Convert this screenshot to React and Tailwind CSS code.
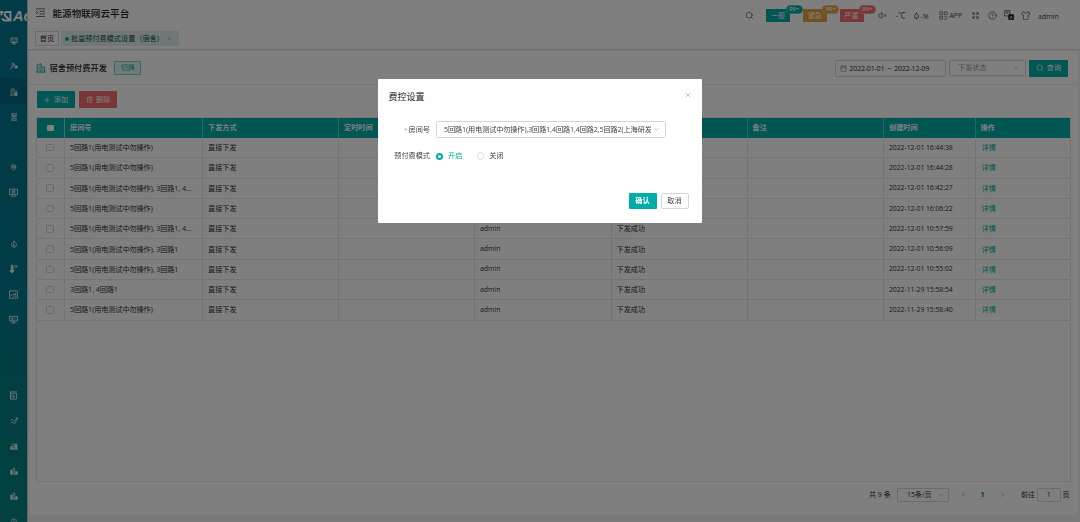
import {
  Search, Plus, Trash2, Calendar, ChevronDown, ChevronLeft, ChevronRight, X, VolumeX,
  CircleHelp, Shirt, Droplet, UserCog, MapPin, Settings,
} from "lucide-react";
import clsx from "clsx";

const rows = [
  ["5回路1(用电测试中勿操作)", "2022-12-01 16:44:38"],
  ["5回路1(用电测试中勿操作)", "2022-12-01 16:44:28"],
  ["5回路1(用电测试中勿操作), 3回路1, 4...", "2022-12-01 16:42:27"],
  ["5回路1(用电测试中勿操作)", "2022-12-01 16:06:22"],
  ["5回路1(用电测试中勿操作), 3回路1, 4...", "2022-12-01 10:57:59"],
  ["5回路1(用电测试中勿操作), 3回路1", "2022-12-01 10:56:09"],
  ["5回路1(用电测试中勿操作), 3回路1", "2022-12-01 10:55:02"],
  ["3回路1, 4回路1", "2022-11-29 15:58:54"],
  ["5回路1(用电测试中勿操作)", "2022-11-29 15:58:40"],
];

const columns = "grid grid-cols-[28px_138px_136px_136px_136.5px_136px_136.5px_91.5px_1fr]";

// 16x16 line icon
const Glyph = ({ children, className = "size-2", sw = 1.3 }) => (
  <svg viewBox="0 0 16 16" fill="none" stroke="currentColor" strokeWidth={sw} className={clsx("shrink-0", className)}>
    {children}
  </svg>
);

const ScreenIcon = () => (
  <Glyph className="size-[8px]" sw={1.8}>
    <path d="M2 2h12v9H2zM4.500 14h7M8 11v3" />
    <path d="M4.500 5.500h2M9.500 5.500h2M5 8.500h6" />
  </Glyph>
);

const BuildingIcon = ({ className = "size-[8px]" }) => (
  <Glyph className={className} sw={1.4}>
    <path d="M2 14.500V3l6-2v13.500M8 6h5.500v3M.5 14.500h15M4 5.500h2M4 8.500h2M4 11.500h2" />
    <path d="M10 9.500h4v4.500h-4z" fill="currentColor" />
  </Glyph>
);

// outlined office block beside the page title
const OfficeIcon = () => (
  <Glyph className="size-[10px] text-[#00aca6]" sw={1.4}>
    <path d="M2 14.500V3l6-2v13.500M8 6.500h5.500v8M0 14.500h16M4 5.500h2M4 8.500h2M4 11.500h2M10 9.500h1.500M10 12h1.500" />
  </Glyph>
);

const MeterIcon = () => (
  <Glyph className="size-[8px]" sw={1.6}>
    <path d="M2 1.500h12M4 1.500v13M12 1.500v13M2.500 14.500h11M6 5h4v3H6zM6 11h4" />
  </Glyph>
);

const PowerScreenIcon = () => (
  <Glyph className="size-[9px]" sw={1.5}>
    <path d="M1 2h14v9.500H1zM3 14.500h10" />
    <circle cx="8" cy="6.800" r="2.800" />
    <path d="M8 5v3" />
  </Glyph>
);

const FlameIcon = () => (
  <Glyph className="size-[8px]" sw={1.6}>
    <path d="M8 1.500c1 3 5 4 5 8a5 5 0 0 1-10 0c0-2 1-3 2-4l1.500 1.500C7.500 5.500 8 4 8 1.500z" />
    <circle cx="8" cy="10.500" r="1.500" />
  </Glyph>
);

const ThermoIcon = () => (
  <Glyph className="size-[9px]" sw={1.6}>
    <path d="M4 2h3v7.500a3 3 0 1 1-3 0z" fill="currentColor" />
    <path d="M9.500 3h4.500v3.500M10 7.500c0-1.500.5-2 1.500-2" />
  </Glyph>
);

const FrameChartIcon = () => (
  <Glyph className="size-[9px]" sw={1.5}>
    <path d="M1 1.500h14v13H1z" />
    <path d="m3 11 3-4 3 2 3-5M9 12.500V10M12 12.500V7" />
  </Glyph>
);

const ScreenChartIcon = () => (
  <Glyph className="size-[9px]" sw={1.6}>
    <path d="M1 2.500h14v8H1zM4 14h8M3.500 6h4M9 5l3 3M4 8.500h4" />
    <path d="M8 10.500V14" />
  </Glyph>
);

const BillIcon = () => (
  <Glyph className="size-[9px]" sw={1.5}>
    <path d="M1.500 1.500h12.500M3 4h10.500v10.500H3zM3 1.500v13M6 7l2.300 2.300L10.500 7M8.300 9v4M6.300 10.500h4" />
  </Glyph>
);

const TrendIcon = () => (
  <Glyph className="size-[8px]" sw={1.7}>
    <path d="M1 7c2-3 4-2 5.500 0s3 2 4-1L15 2M1 12c2-3 4-2 5.500 0s3 2 4-1L13 7M11.500 2H15v4" />
  </Glyph>
);

const BarsIcon = ({ high }) => (
  <Glyph className="size-[8px]" sw={1.4}>
    <path d="M.5 14.500h15" />
    {high ? (
      <>
        <path d="M1.500 9h3v5h-3zM11 4.500h3V14h-3z" fill="currentColor" />
        <path d="M6.500 7.500h3V14h-3zM2 6l3-2 3 2 5-4.500" />
      </>
    ) : (
      <>
        <path d="M1.500 6h3v8h-3zM11.500 9h3v5h-3z" fill="currentColor" />
        <path d="M6.500 2h3v12h-3z" />
      </>
    )}
  </Glyph>
);

// null keeps the place of a menu entry that has no icon
const menu = [
  <ScreenIcon />, <UserCog className="size-2" strokeWidth={2.5} />, <BuildingIcon />, <MeterIcon />, null,
  <MapPin className="size-[7px]" strokeWidth={2.8} />, <PowerScreenIcon />, null,
  <FlameIcon />, <ThermoIcon />, <FrameChartIcon />, <ScreenChartIcon />, null, null,
  <BillIcon />, <TrendIcon />, <BarsIcon high />, <BarsIcon />, <BarsIcon />,
  <Settings className="size-2" />,
];

function Sidebar() {
  return (
    <aside className="flex w-[28px] shrink-0 flex-col overflow-hidden border-r border-[#b8cdd2] bg-linear-to-b from-[#007690] via-[#00788c] to-[#068480] text-[#e4f0f2]">
      <div className="flex h-[28.500px] shrink-0 items-center pt-[3px] text-white">
        <svg viewBox="0 0 12 12" className="h-[12px] w-[12px] shrink-0" fill="none" stroke="currentColor" strokeWidth="1.900">
          <path d="M0 2h3.500M1.500 2v3.500M5 2h5.500v8.500H4L2 8.500M5 2v3.500l5 5" />
        </svg>
        <span className="ml-px font-['Liberation_Sans',sans-serif] text-[14.500px] leading-none font-bold italic">Ac</span>
      </div>
      {menu.map((icon, i) => (
        <div key={i} className={clsx("flex h-[25.300px] shrink-0 items-center justify-center", i === 2 && "bg-[#006880]")}>
          {icon}
        </div>
      ))}
    </aside>
  );
}

const AlarmTag = ({ label, color }) => (
  <div className={clsx("relative flex h-[12.500px] w-[24px] items-center justify-center text-white", color)}>
    {label}
    <span className={clsx("absolute -top-[4.500px] left-[19.500px] flex h-[9px] w-[17px] items-center justify-center rounded-full border border-white/30 text-[6px] font-semibold", color)}>
      99+
    </span>
  </div>
);

function TopBar() {
  return (
    <header className="h-[50px] shrink-0 border-b border-[#d8d8d8] bg-white">
      <div className="flex h-[28px] items-center pt-[3px] pr-[21px] pl-[8px]">
        <Glyph className="mt-[-6px] h-[9px] w-[9px] text-[#333]" sw={1.3}>
          <path d="M0 1.500h16M6 6h10M6 10.500h10M0 15h16M0 5.500 3 8l-3 2.500" />
        </Glyph>
        <h1 className="mt-[-4px] ml-[7.500px] text-[9.600px] font-medium text-[#222]">能源物联网云平台</h1>
        <div className="ml-auto flex items-center text-[#444]">
          <Search className="size-[9px]" strokeWidth={1.6} />
          <div className="ml-[12px] flex gap-[12.700px]">
            <AlarmTag label="一般" color="bg-[#00aca6]" />
            <AlarmTag label="紧急" color="bg-[#e6a23c]" />
            <AlarmTag label="严重" color="bg-[#f56c6c]" />
          </div>
          <VolumeX className="ml-[14px] size-[9px]" strokeWidth={1.800} />
          <span className="ml-[9px] w-[11px] text-[7.500px] whitespace-nowrap">-℃</span>
          <Droplet className="ml-[6px] size-[7px]" strokeWidth={3} />
          <span className="ml-[1px] w-[11px] pt-px text-[7px] whitespace-nowrap">-%</span>
          <Glyph className="ml-[7px] size-[9px]" sw={1.1}>
            <path d="M1.500 1.500h5v5h-5zM9.500 1.500h5v5h-5zM1.500 9.500h5v5h-5zM9.500 9.500h2v2M14.500 9v3M9.500 14.500h5" />
          </Glyph>
          <span className="ml-[2px] w-[13px] pt-[2px] text-[6.800px]">APP</span>
          <Glyph className="ml-[9px] size-[7px]" sw={1.9}>
            <path d="M2 6V2h4M2 2l4.500 4.500M10 2h4v4M14 2 9.500 6.500M2 10v4h4M2 14l4.500-4.500M14 10v4h-4M14 14 9.500 9.500" />
          </Glyph>
          <CircleHelp className="ml-[9px] size-[9px]" strokeWidth={1.6} />
          <Glyph className="mt-[-1px] ml-[7px] size-[10px]" sw={1.2}>
            <path d="M1 1h8.500v8.500H1zM3 3.500h4.500M5 3.500v3" />
            <path d="M7.500 7.500h8v8h-8z" fill="#222" stroke="#222" />
            <path d="m10 14 1.500-4 1.500 4" stroke="#fff" />
          </Glyph>
          <Shirt className="ml-[7.500px] size-[9.500px]" strokeWidth={1.6} />
          <span className="ml-[7.500px] w-[21px] pt-px text-[7px]">admin</span>
        </div>
      </div>
      <div className="mt-[3px] flex h-[15px] gap-[2px] pl-[7px] text-[#333]">
        <span className="flex w-[24px] items-center justify-center border border-[#d8d8d8]">首页</span>
        <span className="flex w-[118px] items-center bg-[#def1ef] pl-[3.500px] text-[#204744]">
          <i className="mr-[2.500px] size-[4px] rounded-full bg-[#00aca6]" />
          批量预付费模式设置（宿舍）
          <X className="ml-[3px] size-[5px] text-[#777]" />
        </span>
      </div>
    </header>
  );
}

function FilterBar() {
  return (
    <div className="flex h-[34px] items-center border-b border-[#ececec] pt-px pr-[10px] pl-[7px]">
      <OfficeIcon />
      <h2 className="ml-[3.500px] text-[8.200px] font-medium text-[#222]">宿舍预付费开发</h2>
      <button className="ml-[7.500px] h-[14px] w-[27px] rounded-[1px] border border-[#6fcdc8] bg-[#e3f6f5] text-[#00aca6]">切换</button>
      <div className="ml-auto flex h-[17px] w-[111.500px] items-center rounded-[1.500px] border border-[#d6d6d6] pl-[4.500px] text-[7px] text-[#333]">
        <Calendar className="size-[7px] text-[#888]" />
        <span className="ml-[2.500px] pt-px tracking-[-0.180px]">2022-01-01</span>
        <span className="mx-[3px] pt-px">~</span>
        <span className="pt-px tracking-[-0.180px]">2022-12-09</span>
      </div>
      <div className="ml-[3px] flex h-[16px] w-[77px] items-center justify-between rounded-[1.500px] border border-[#d6d6d6] pr-[5px] pl-[8px] text-[#999]">
        下发状态
        <ChevronDown className="size-[8px]" strokeWidth={1.500} />
      </div>
      <button className="ml-[3px] flex h-[17px] w-[39px] items-center justify-center gap-[3px] rounded-[1px] bg-[#00aca6] text-white">
        <Search className="size-[8px]" /> 查询
      </button>
    </div>
  );
}

function DataTable() {
  return (
    <div className="mt-[9px] mr-[7px] ml-[7px] h-[365px] shrink-0 border border-[#e8e8e8] text-[#333]">
      <div className={clsx(columns, "h-[20px] bg-[#00aca6] font-bold text-white")}>
        <div className="flex items-center justify-center border-r border-[#8fd8d4]">
          <i className="size-[6.500px] rounded-[1px] bg-white" />
        </div>
        {["房间号", "下发方式", "定时时间", "操作人", "下发状态", "备注", "创建时间", "操作"].map((name, i) => (
          <div key={name} className={clsx("flex items-center pl-[5px]", i < 7 && "border-r border-[#5cc8c3]")}>{name}</div>
        ))}
      </div>
      {rows.map(([room, time]) => (
        <div key={time} className={clsx(columns, "h-[20.300px] *:flex *:items-center *:border-r *:border-b *:border-[#e8e8e8] *:pl-[5px] *:whitespace-nowrap *:last:border-r-0")}>
          <div>
            <i className="ml-[4px] size-[7.500px] rounded-[1.500px] border border-[#d2d2d2]" />
          </div>
          <div className="tracking-[-0.080px]">{room}</div>
          <div>直接下发</div>
          <div />
          <div className="pt-px text-[6.900px]">admin</div>
          <div>下发成功</div>
          <div />
          <div className="pt-px text-[6.900px] tracking-[-0.070px]">{time}</div>
          <div className="text-[#00aca6]"><span className="ml-px">详情</span></div>
        </div>
      ))}
    </div>
  );
}

function Pager() {
  return (
    <div className="mt-[5px] flex h-[15px] items-center justify-end pr-[8.500px] text-[7px] text-[#333]">
      <span className="w-[21px] whitespace-nowrap">共 9 条</span>
      <div className="ml-[7px] flex h-[14px] w-[51.500px] items-center justify-between rounded-[1.500px] border border-[#d6d6d6] pr-[4px] pl-[9px]">
        15条/页
        <ChevronDown className="size-[6px] text-[#999]" />
      </div>
      <ChevronLeft className="ml-[11px] size-[7px] text-[#777]" />
      <span className="ml-[14px] w-[4px] font-bold text-[#00857f]">1</span>
      <ChevronRight className="ml-[14px] size-[7px] text-[#777]" />
      <span className="ml-[15.500px]">前往</span>
      <span className="mx-[2px] flex h-[14px] w-[23.500px] items-center justify-center rounded-[1.500px] border border-[#d6d6d6]">1</span>
      <span>页</span>
    </div>
  );
}

function FeeDialog() {
  return (
    <div className="fixed inset-0 z-10 bg-black/50">
      <div role="dialog" className="mt-[79px] ml-[378px] flex h-[144px] w-[324px] flex-col rounded-[1px] bg-white text-[#444]">
        <div className="flex h-[34px] items-center justify-between pr-[10px] pl-[10.500px]">
          <h3 className="text-[9px] text-[#222]">费控设置</h3>
          <X className="mt-[-3px] size-[8px] text-[#888]" strokeWidth={1.5} />
        </div>
        <div className="mt-[8px] flex h-[17px] items-center">
          <label className="w-[52px] text-right"><span className="mr-[1px] text-[6px] text-[#e08080]">*</span>房间号</label>
          <div className="ml-[6px] flex h-[17px] w-[229.500px] items-center rounded-[1.500px] border border-[#d5d5d5] pr-[5px] pl-[7px]">
            <span className="w-[207px] overflow-hidden pt-px tracking-[-0.100px] whitespace-nowrap">5回路1(用电测试中勿操作),3回路1,4回路1,4回路2,5回路2(上海研发</span>
            <ChevronDown className="ml-auto size-[7px] shrink-0 text-[#999]" strokeWidth={1.800} />
          </div>
        </div>
        <div className="mt-[11px] flex h-[14px] items-center">
          <label className="w-[52px] text-right">预付费模式</label>
          <i className="ml-[6px] size-[7px] rounded-full border-[2.500px] border-[#00aca6]" />
          <span className="ml-[5px] text-[#00aca6]">开启</span>
          <i className="ml-[14.500px] size-[7.500px] rounded-full border border-[#dcdcdc]" />
          <span className="ml-[5px]">关闭</span>
        </div>
        <div className="mt-auto mb-[14px] flex justify-end gap-[4px] pr-[13.500px]">
          <button className="h-[16px] w-[28px] rounded-[1px] bg-[#00aca6] font-bold text-white">确认</button>
          <button className="h-[16px] w-[28px] rounded-[1.500px] border border-[#d5d5d5]">取消</button>
        </div>
      </div>
    </div>
  );
}

export default function App() {
  return (
    <div className="flex h-screen w-screen overflow-hidden bg-[#f3f3f3] font-['Open_Sans','Noto_Sans_CJK_SC',sans-serif] text-[7.150px] leading-none">
      <Sidebar />
      <div className="flex min-w-0 flex-1 flex-col">
        <TopBar />
        <main className="mt-[1px] mr-[2px] ml-[1px] flex h-[464px] flex-col bg-white">
          <FilterBar />
          <div className="mt-[6px] ml-[7.500px] flex gap-[4.500px] text-white">
            <button className="flex h-[17px] w-[38px] items-center justify-center gap-[3px] rounded-[1px] bg-[#00aca6]">
              <Plus className="size-[8px]" /> 添加
            </button>
            <button className="flex h-[17px] w-[38px] items-center justify-center gap-[3px] rounded-[1px] bg-[#f56c6c]">
              <Trash2 className="size-[7.500px]" /> 删除
            </button>
          </div>
          <DataTable />
          <Pager />
        </main>
      </div>
      <FeeDialog />
    </div>
  );
}
